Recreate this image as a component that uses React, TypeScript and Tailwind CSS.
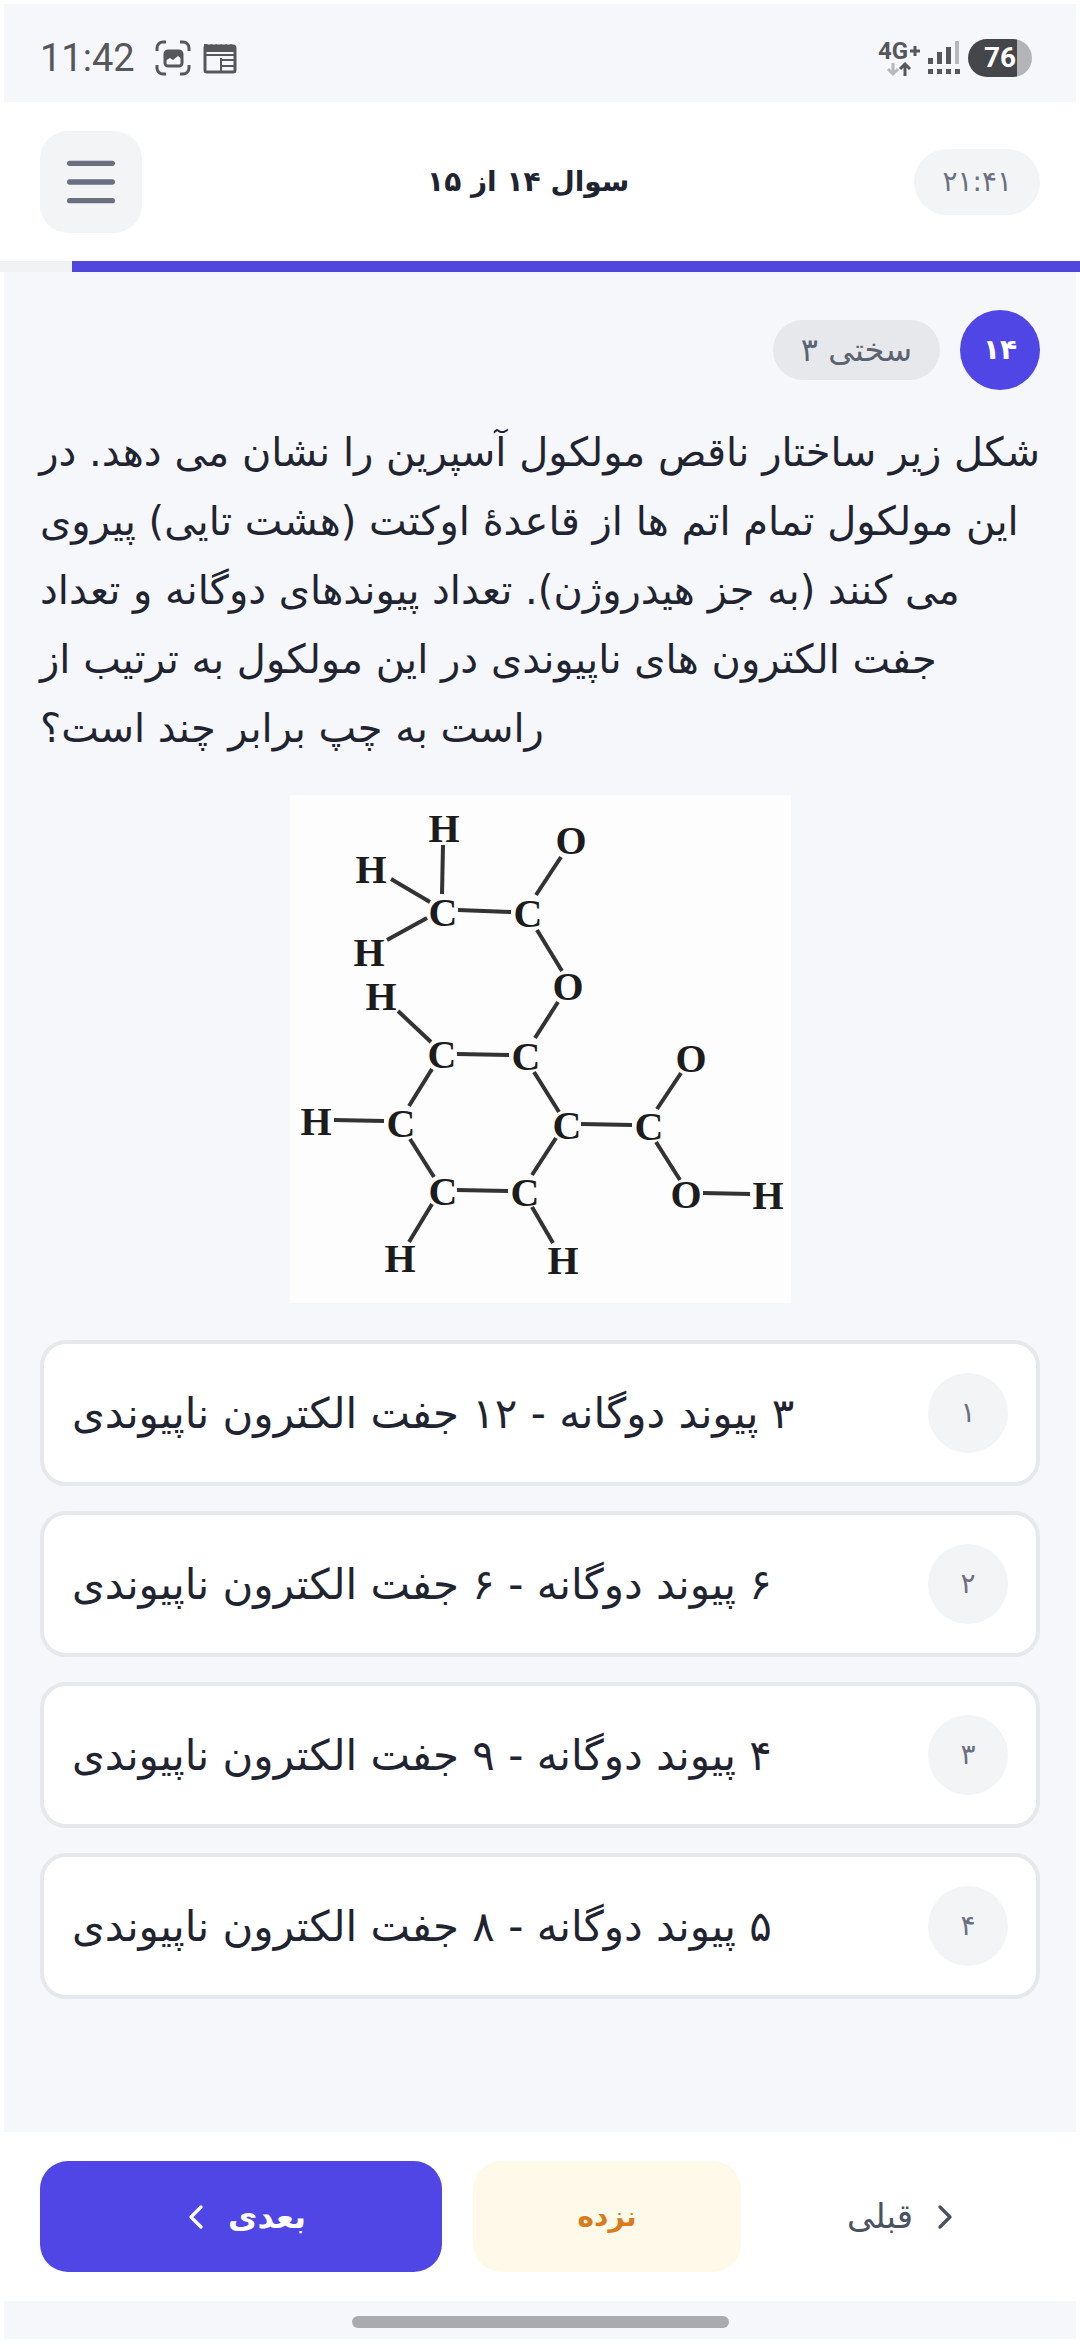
import { ChevronLeft, ChevronRight, Menu } from "lucide-react";

type Point = [number, number];

const questionLines = [
  "شکل زیر ساختار ناقص مولکول آسپرین را نشان می دهد. در",
  "این مولکول تمام اتم ها از قاعدهٔ اوکتت (هشت تایی) پیروی",
  "می کنند (به جز هیدروژن). تعداد پیوندهای دوگانه و تعداد",
  "جفت الکترون های ناپیوندی در این مولکول به ترتیب از",
  "راست به چپ برابر چند است؟",
];

const options = [
  { number: "۱", text: "۳ پیوند دوگانه - ۱۲ جفت الکترون ناپیوندی" },
  { number: "۲", text: "۶ پیوند دوگانه - ۶ جفت الکترون ناپیوندی" },
  { number: "۳", text: "۴ پیوند دوگانه - ۹ جفت الکترون ناپیوندی" },
  { number: "۴", text: "۵ پیوند دوگانه - ۸ جفت الکترون ناپیوندی" },
];

const atoms: { el: string; at: Point }[] = [
  { el: "H", at: [155, 34] },
  { el: "H", at: [82, 75] },
  { el: "H", at: [80, 158] },
  { el: "C", at: [154, 118] },
  { el: "C", at: [239, 119] },
  { el: "O", at: [282, 46] },
  { el: "O", at: [279, 192] },
  { el: "H", at: [92, 202] },
  { el: "C", at: [153, 260] },
  { el: "C", at: [237, 262] },
  { el: "H", at: [27, 327] },
  { el: "C", at: [112, 329] },
  { el: "C", at: [278, 331] },
  { el: "C", at: [360, 332] },
  { el: "O", at: [402, 264] },
  { el: "O", at: [397, 400] },
  { el: "H", at: [479, 401] },
  { el: "C", at: [154, 397] },
  { el: "C", at: [236, 398] },
  { el: "H", at: [111, 464] },
  { el: "H", at: [274, 466] },
];

const bonds: [Point, Point][] = [
  [[154, 50], [153, 99]],
  [[102, 84], [141, 107]],
  [[98, 145], [138, 123]],
  [[169, 115], [222, 117]],
  [[247, 100], [272, 62]],
  [[248, 135], [273, 176]],
  [[269, 207], [246, 243]],
  [[109, 216], [142, 247]],
  [[168, 259], [220, 260]],
  [[143, 274], [120, 311]],
  [[245, 277], [270, 317]],
  [[45, 325], [95, 326]],
  [[121, 344], [145, 382]],
  [[292, 329], [343, 330]],
  [[392, 278], [368, 314]],
  [[267, 343], [243, 380]],
  [[367, 347], [391, 385]],
  [[168, 395], [219, 396]],
  [[143, 409], [120, 447]],
  [[243, 412], [264, 448]],
  [[414, 398], [461, 399]],
];

function StatusBar() {
  return (
    <div
      dir="ltr"
      className="flex h-[98px] items-center justify-between pt-[10px] pr-11 pl-9 text-[#55575a]"
    >
      <div className="flex items-center gap-3">
        <span className="font-[Roboto,sans-serif] text-[38px] leading-10">11:42</span>
        <svg viewBox="0 0 36 36" className="ml-2 size-9" fill="none">
          <path
            d="M2 11V8a6 6 0 0 1 6-6h3M25 2h3a6 6 0 0 1 6 6v3M34 25v3a6 6 0 0 1-6 6h-3M11 34H8a6 6 0 0 1-6-6v-3"
            stroke="currentColor"
            strokeWidth="3"
          />
          <rect x="10" y="11" width="17" height="15" rx="3" stroke="currentColor" strokeWidth="3" />
          <path d="M10 11h17v8l-4-3-5 4-3-2-5 3z" fill="currentColor" />
        </svg>
        <svg viewBox="0 0 34 32" className="h-8 w-[34px]" fill="none">
          <rect x="2" y="4" width="30" height="26" rx="2" stroke="currentColor" strokeWidth="3" />
          <path d="M1 2h3l2 2 2-2 3 2 2-2 3 2 2-2 3 2 2-2 3 2 2-2 3 2v6H1z" fill="currentColor" />
          <path d="M3 13h28M18 16v13M18 18h14M18 24h14" stroke="currentColor" strokeWidth="2" />
        </svg>
      </div>
      <div className="flex items-center gap-2">
        <svg viewBox="0 0 42 40" className="h-10 w-[42px]">
          <text x="0" y="21" fill="currentColor" className="font-[Roboto,sans-serif] text-[24px] font-bold">
            4G
          </text>
          <path d="M32 13h10M37 8v10" stroke="currentColor" strokeWidth="3" />
          <path d="M15 25v10M10 31l5 5 5-5" fill="none" stroke="#b6b8bb" strokeWidth="3" />
          <path d="M27 38V27M22 31l5-5 5 5" fill="none" stroke="currentColor" strokeWidth="3" />
        </svg>
        <svg viewBox="0 0 32 36" className="h-9 w-8" fill="currentColor">
          <path d="M0 18h5v6H0zM9 12h5v12H9zM18 7h5v17h-5z" />
          <path d="M27 1h4v23h-4z" fill="#b6b8bb" />
          <path d="M0 29h5v5H0zM9 29h5v5H9zM18 29h5v5h-5zM27 29h5v5h-5z" />
        </svg>
        <div className="flex h-[38px] w-16 items-center justify-center overflow-hidden rounded-full bg-linear-to-r from-[#444649] from-76% to-[#b2b4b7] to-76% font-[Roboto,sans-serif] text-[28px] leading-none font-bold text-white">
          76
        </div>
      </div>
    </div>
  );
}

function Molecule() {
  return (
    <svg
      viewBox="1 0 501 508"
      role="img"
      aria-label="ساختار آسپرین"
      className="mx-auto block w-[501px] bg-[#fdfdfd]"
    >
      <g stroke="#333" strokeWidth="4">
        {bonds.map(([a, b], i) => (
          <line key={i} x1={a[0]} y1={a[1]} x2={b[0]} y2={b[1]} />
        ))}
      </g>
      <g
        textAnchor="middle"
        fill="#1c1c1c"
        className="font-['Liberation_Serif',serif] text-[40px] font-bold"
      >
        {atoms.map(({ el, at }, i) => (
          <text key={i} x={at[0]} y={at[1] + 13}>
            {el}
          </text>
        ))}
      </g>
    </svg>
  );
}

export default function App() {
  return (
    <div
      dir="rtl"
      lang="fa"
      className="flex min-h-screen flex-col border-4 border-white bg-[#f5f7fb] font-['DejaVu_Sans',sans-serif] text-[#1f2430]"
    >
      <StatusBar />

      <header className="flex h-[159px] items-center justify-between bg-white px-9">
        <span className="rounded-full bg-[#f3f4f6] px-7 text-[28px] leading-[66px] text-[#6b7080]">
          ۲۱:۴۱
        </span>
        <h1 className="text-[28px] font-bold">سوال ۱۴ از ۱۵</h1>
        <button
          type="button"
          aria-label="فهرست"
          className="flex size-[102px] items-center justify-center rounded-[28px] bg-[#f3f4f6] text-[#6b7080]"
        >
          <Menu size={64} strokeWidth={2} />
        </button>
      </header>
      <div className="-mx-1 h-[11px] bg-[#f1f2f4]">
        <div className="h-full w-14/15 bg-[#4f46dc]" />
      </div>

      <main className="flex-1 px-9 pt-[38px]">
        <div className="flex items-center gap-5">
          <span className="flex size-20 items-center justify-center rounded-full bg-[#4f46e5] text-[28px] font-bold text-white">
            ۱۴
          </span>
          <span className="rounded-full bg-[#e7e8eb] px-7 text-[32px] leading-[60px] text-[#5b6270]">
            سختی ۳
          </span>
        </div>

        <p className="mt-7 text-left text-[40px] leading-[69px] whitespace-nowrap">
          {questionLines.map((line) => (
            <span key={line} className="block">
              {line}
            </span>
          ))}
        </p>

        <div className="mt-8">
          <Molecule />
        </div>

        <div className="mt-[37px] flex flex-col gap-[25px]">
          {options.map((option) => (
            <button
              key={option.number}
              type="button"
              className="flex h-[146px] items-center justify-between rounded-[26px] border-4 border-[#e7e8eb] bg-white px-7"
            >
              <span className="flex size-20 items-center justify-center rounded-full bg-[#f3f4f6] text-[28px] text-[#6b7080]">
                {option.number}
              </span>
              <span className="text-[42px]">{option.text}</span>
            </button>
          ))}
        </div>
      </main>

      <footer className="flex h-[169px] items-center gap-[31px] bg-white px-9">
        <button
          type="button"
          className="flex h-[111px] flex-2 items-center justify-center gap-3 rounded-[28px] text-[34px] text-[#4b5160]"
        >
          <ChevronRight size={40} />
          قبلی
        </button>
        <button
          type="button"
          className="h-[111px] flex-2 rounded-[28px] bg-[#fff9e9] text-[28px] font-bold text-[#d97a1c]"
        >
          نزده
        </button>
        <button
          type="button"
          className="flex h-[111px] flex-3 items-center justify-center gap-3 rounded-[28px] bg-[#4f46e5] text-[32px] font-bold text-white"
        >
          بعدی
          <ChevronLeft size={40} />
        </button>
      </footer>
      <div className="flex h-[38px] justify-center pt-[15px]">
        <div className="h-3 w-[377px] rounded-full bg-[#a9abae]" />
      </div>
    </div>
  );
}
